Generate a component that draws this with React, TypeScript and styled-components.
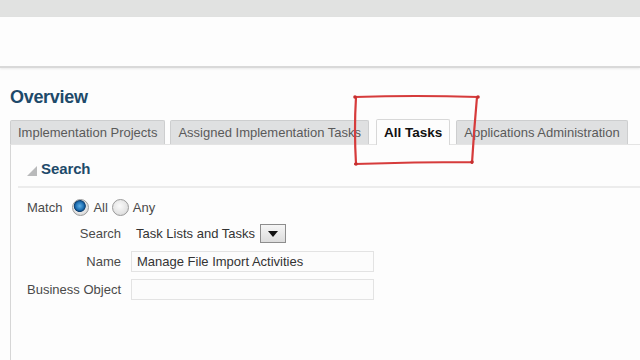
import React from 'react';
import styled, { createGlobalStyle } from 'styled-components';

const GlobalStyle = createGlobalStyle`
  html, body {
    margin: 0;
    padding: 0;
    background: #fdfdfd;
    font-family: 'Liberation Sans', Arial, sans-serif;
  }
`;

const Page = styled.div`
  position: relative;
  width: 640px;
  height: 360px;
  overflow: hidden;
  background: #fdfdfd;
`;

const TopBar = styled.div`
  height: 17px;
  background: #e1e2e1;
`;

const Banner = styled.div`
  height: 49px;
  background: #fdfdfd;
  border-bottom: 2px solid #d9d9d9;
  box-shadow: 0 1px 2px rgba(0, 0, 0, 0.08);
`;

const Main = styled.div`
  padding: 19px 0 0 10px;
`;

const Title = styled.h1`
  margin: 0 0 12px 0;
  font-size: 18px;
  font-weight: 700;
  color: #1d4a6a;
  letter-spacing: -0.3px;
  line-height: 20px;
`;

const TabRow = styled.div`
  display: flex;
  align-items: flex-end;
  height: 25px;
`;

const Tab = styled.div<{ $active?: boolean }>`
  height: ${p => (p.$active ? '26px' : '24px')};
  padding: 0 ${p => (p.$active ? '7px' : '7px')};
  margin-right: ${p => (p.$active ? '6px' : '5px')};
  margin-left: ${p => (p.$active ? '2px' : '0')};
  box-sizing: border-box;
  display: flex;
  align-items: center;
  font-size: ${p => (p.$active ? '13.5px' : '13px')};
  font-weight: ${p => (p.$active ? 700 : 400)};
  color: ${p => (p.$active ? '#111' : '#5a5a5a')};
  background: ${p => (p.$active ? '#fdfdfd' : '#dfe0e1')};
  border: 1px solid ${p => (p.$active ? '#d8d8d8' : '#cdcecf')};
  border-bottom: none;
  border-radius: 2px 2px 0 0;
  white-space: nowrap;
  margin-bottom: ${p => (p.$active ? '-1px' : '0')};
`;

const Panel = styled.div`
  border-left: 1px solid #d6d6d6;
  border-top: 1px solid #e4e4e4;
  height: 220px;
  background: #fdfdfd;
`;

const SectionHead = styled.div`
  display: flex;
  align-items: center;
  gap: 4px;
  height: 43px;
  margin-left: 7px;
  padding: 6px 0 0 9px;
  box-sizing: border-box;
  border-bottom: 2px solid #ececec;
`;

const Triangle = styled.span`
  width: 0;
  height: 0;
  border-left: 10px solid transparent;
  border-bottom: 10px solid #b9babb;
  margin-top: 4px;
`;

const SectionTitle = styled.span`
  font-size: 15px;
  font-weight: 700;
  color: #1d4a6a;
  letter-spacing: -0.1px;
`;

const Form = styled.div`
  padding: 9px 0 0 16px;
  display: flex;
  flex-direction: column;
  gap: 6px;
`;

const MatchRow = styled.div`
  display: flex;
  align-items: center;
  height: 20px;
  font-size: 13px;
  color: #4a4a4a;
`;

const MatchLabel = styled.span`
  margin-right: 10px;
`;

const Radio = styled.span<{ $on?: boolean }>`
  width: 17px;
  height: 17px;
  border-radius: 50%;
  box-sizing: border-box;
  border: 1px solid #9a9a9a;
  background: ${p =>
    p.$on
      ? 'radial-gradient(circle at 45% 40%, #5fb0e6 0, #1e6fb3 33%, #0d3e6e 46%, #e6e6e6 52%, #cfcfcf 100%)'
      : 'radial-gradient(circle at 45% 40%, #fafafa 0, #e4e4e4 60%, #cfcfcf 100%)'};
  margin-right: 4px;
`;

const RadioText = styled.span`
  margin-right: 4px;
`;

const FieldGrid = styled.div`
  display: grid;
  grid-template-columns: 94px auto;
  column-gap: 10px;
  row-gap: 7px;
  align-items: center;
`;

const Label = styled.span`
  font-size: 13px;
  color: #4a4a4a;
  text-align: right;
  white-space: nowrap;
`;

const SelectWrap = styled.div`
  display: flex;
  align-items: center;
  gap: 2px;
  height: 21px;
`;

const SelectText = styled.span`
  font-size: 13px;
  color: #333;
  padding-left: 5px;
  width: 122px;
  white-space: nowrap;
`;

const DropButton = styled.span`
  width: 26px;
  height: 19px;
  box-sizing: border-box;
  border: 1px solid #8d8d8d;
  background: linear-gradient(#f6f6f6, #dcdcdc);
  display: flex;
  align-items: center;
  justify-content: center;
  &::after {
    content: '';
    border-left: 5px solid transparent;
    border-right: 5px solid transparent;
    border-top: 6px solid #111;
  }
`;

const Input = styled.div`
  width: 243px;
  height: 21px;
  box-sizing: border-box;
  border: 1px solid #e3e3e3;
  background: #fcfcfc;
  font-size: 13px;
  color: #333;
  padding-left: 5px;
  display: flex;
  align-items: center;
`;

const Annotation = styled.svg`
  position: absolute;
  left: 0;
  top: 0;
  pointer-events: none;
`;

export default function App() {
  return (
    <Page>
      <GlobalStyle />
      <TopBar />
      <Banner />
      <Main>
        <Title>Overview</Title>
        <TabRow>
          <Tab>Implementation Projects</Tab>
          <Tab>Assigned Implementation Tasks</Tab>
          <Tab $active>All Tasks</Tab>
          <Tab>Applications Administration</Tab>
        </TabRow>
        <Panel>
          <SectionHead>
            <Triangle />
            <SectionTitle>Search</SectionTitle>
          </SectionHead>
          <Form>
            <MatchRow>
              <MatchLabel>Match</MatchLabel>
              <Radio $on />
              <RadioText>All</RadioText>
              <Radio />
              <RadioText>Any</RadioText>
            </MatchRow>
            <FieldGrid>
              <Label>Search</Label>
              <SelectWrap>
                <SelectText>Task Lists and Tasks</SelectText>
                <DropButton />
              </SelectWrap>
              <Label>Name</Label>
              <Input>Manage File Import Activities</Input>
              <Label>Business Object</Label>
              <Input />
            </FieldGrid>
          </Form>
        </Panel>
      </Main>
      <Annotation width="640" height="360" viewBox="0 0 640 360">
        <path
          d="M355 97 Q 415 95 478 97 M356 97 Q 354 130 356 164 M355 164 Q 415 162 472 162 M477 97 Q 474 130 472 163"
          fill="none"
          stroke="#d63b3b"
          strokeWidth="2.2"
          strokeLinecap="round"
        />
        <circle cx="355" cy="97" r="1.8" fill="#c62f2f" />
        <circle cx="478" cy="97" r="1.8" fill="#c62f2f" />
        <circle cx="356" cy="164" r="1.8" fill="#c62f2f" />
        <circle cx="472" cy="162" r="1.8" fill="#c62f2f" />
      </Annotation>
    </Page>
  );
}
